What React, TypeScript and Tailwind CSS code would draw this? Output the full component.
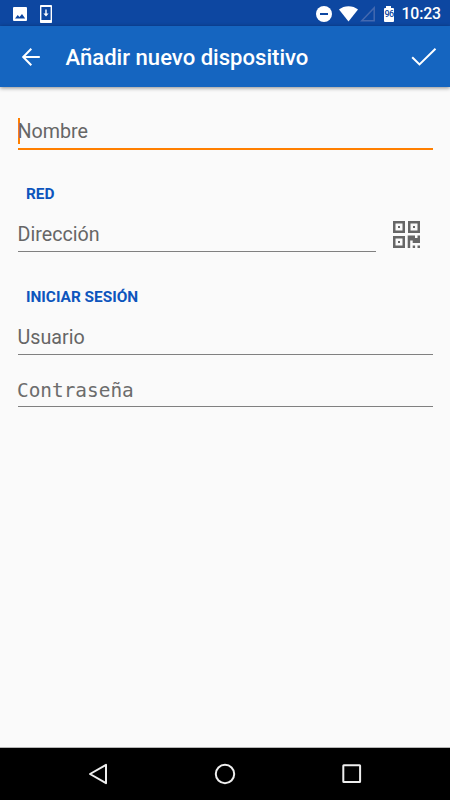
import type { ReactNode } from "react";

function StatusBar() {
  return (
    <div className="flex h-[26px] items-center bg-[#0d47a1] pt-px text-white">
      <svg className="ml-[13px] h-[14px] w-[14px]" viewBox="0 0 14 14">
        <rect width="14" height="14" rx="1" fill="#fff" />
        <path d="M2 11.5 4.7 8l1.8 2.1L9 7l3.2 4.5z" fill="#0d47a1" />
      </svg>
      <svg className="ml-[13px] h-[18px] w-[12px]" viewBox="0 0 12 18">
        <rect width="12" height="18" rx="0.8" fill="#fff" />
        <rect x="1.4" y="2" width="9.2" height="13" fill="#0d47a1" />
        <path d="M6 4.5v5" fill="none" stroke="#fff" strokeWidth="1.4" />
        <path d="M3.4 8.5h5.2L6 11.6z" fill="#fff" />
      </svg>
      <div className="flex-1" />
      <svg className="h-4 w-4" viewBox="0 0 16 16">
        <circle cx="8" cy="8" r="8" fill="#fff" />
        <rect x="4" y="7" width="8" height="2" fill="#0d47a1" />
      </svg>
      <svg className="ml-[7px] h-4 w-[19px]" viewBox="0 0 19 16">
        <path d="M0 3.6C5-1 14-1 19 3.6L9.5 15.6z" fill="#fff" />
      </svg>
      <svg className="ml-[2px] h-4 w-[15px]" viewBox="0 0 15 16">
        <path d="M1.8 14.8 14.2 1.8v13z" fill="none" stroke="#4469b0" strokeWidth="1.5" />
      </svg>
      <div className="ml-[9px] flex h-4 w-[10px] flex-col items-center">
        <div className="h-[2px] w-[5px] bg-white" />
        <div className="flex h-[14px] w-[10px] items-center justify-center rounded-[1px] bg-white text-[9px] font-medium leading-none tracking-[-0.7px] text-[#0d47a1]">
          96
        </div>
      </div>
      <span className="ml-[7.5px] mr-[9px] pt-px text-[15.8px] font-medium leading-none tracking-[-0.1px]">
        10:23
      </span>
    </div>
  );
}

function AppBar() {
  return (
    <header className="flex h-[61px] items-center bg-[#1565c0] text-white shadow-[0_1px_4px_rgba(0,0,0,0.45)]">
      <svg className="ml-[21px] h-5 w-5" viewBox="0 0 20 20" fill="none" stroke="#fff" strokeWidth="2">
        <path d="M18.8 10H2.5M10.3 1.8 2.2 10l8.1 8.2" />
      </svg>
      <h1 className="ml-[24.5px] flex-1 pt-[2px] text-[22.1px] font-medium leading-none">
        Añadir nuevo dispositivo
      </h1>
      <svg className="mr-[13px] h-5 w-[26px]" viewBox="0 0 26 20" fill="none" stroke="#fff" strokeWidth="2">
        <path d="M1.2 10.2 8.5 17.4 24.5 1.8" />
      </svg>
    </header>
  );
}

function Field({ label, mono = false }: { label: string; mono?: boolean }) {
  return (
    <div className="flex h-8 flex-1 items-start border-b border-[#808080] pt-[3px] leading-6 text-[#666]">
      {mono ? (
        <span className="-ml-[0.5px] pt-px font-['DejaVu_Sans_Mono',monospace] text-[19.4px] text-[#6c6c6c]">
          {label}
        </span>
      ) : (
        <span className="text-[19.7px]">{label}</span>
      )}
    </div>
  );
}

function SectionTitle({ children }: { children: ReactNode }) {
  return <h2 className="ml-[8.5px] pt-[2px] text-[15.4px] font-bold leading-5 text-[#0d55bd]">{children}</h2>;
}

function QrIcon() {
  return (
    <svg className="mt-px h-[27px] w-[27px]" viewBox="0 0 27 27" fill="#666">
      <path
        fillRule="evenodd"
        d="M0 0h12v12H0zM2.5 2.5v7h7v-7zM15 0h12v12H15zM17.5 2.5v7h7v-7zM0 15h12v12H0zM2.5 17.5v7h7v-7z"
      />
      <path d="M5 5h2v2H5zM20 5h2v2h-2zM5 20h2v2H5z" />
      <path d="M14.7 14.5H22V17h2.5v-2.5H27V22h-7.3v-2.6h-2.5V27h-2.5zM19.7 24.5h2.4V27h-2.4zM24.5 24.5H27V27h-2.5z" />
    </svg>
  );
}

function NavBar() {
  return (
    <nav className="flex h-[52px] items-center bg-black">
      <svg className="ml-[88px] h-[22px] w-5" viewBox="0 0 20 22" fill="none" stroke="#eee" strokeWidth="2">
        <path d="M18 1.8v18.4L2 11z" strokeLinejoin="round" />
      </svg>
      <svg className="ml-[106px] h-[22px] w-[22px]" viewBox="0 0 22 22" fill="none" stroke="#eee" strokeWidth="2">
        <circle cx="11" cy="11" r="9.2" />
      </svg>
      <svg className="ml-[106px] h-5 w-5" viewBox="0 0 20 20" fill="none" stroke="#eee" strokeWidth="2">
        <rect x="1.3" y="1.3" width="16.8" height="16.8" rx="0.5" />
      </svg>
    </nav>
  );
}

export default function App() {
  return (
    <div className="flex h-[800px] w-[450px] flex-col bg-[#fafafa] font-[Roboto,sans-serif]">
      <StatusBar />
      <AppBar />
      <main className="flex flex-1 flex-col border-b border-[#b5b5b5] px-[17.5px] pt-[31px]">
        <div className="flex h-8 items-start border-b-2 border-[#ff7f00]">
          <div className="h-[26px] w-[2px] bg-[#ff7f00]" />
          <span className="-ml-[2px] text-[19.7px] leading-[28px] text-[#666]">Nombre</span>
        </div>
        <div className="mt-[32px]">
          <SectionTitle>RED</SectionTitle>
        </div>
        <div className="mt-[16px] flex items-start">
          <Field label="Dirección" />
          <div className="ml-[17px] mr-[12.5px]">
            <QrIcon />
          </div>
        </div>
        <div className="mt-[33px]">
          <SectionTitle>INICIAR SESIÓN</SectionTitle>
        </div>
        <div className="mt-[16px] flex">
          <Field label="Usuario" />
        </div>
        <div className="mt-[20px] flex">
          <Field label="Contraseña" mono />
        </div>
      </main>
      <NavBar />
    </div>
  );
}
